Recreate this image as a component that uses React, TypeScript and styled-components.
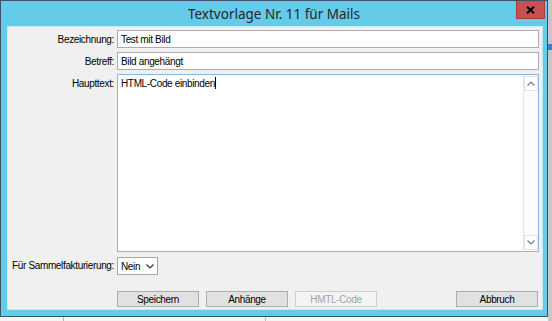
import React from 'react';
import styled, { createGlobalStyle } from 'styled-components';

const Global = createGlobalStyle`
  html, body { margin: 0; padding: 0; }
  body { width: 552px; height: 321px; overflow: hidden; background: #f3f3f3; }
`;

const Desktop = styled.div`
  width: 552px;
  height: 321px;
  background-color: #f4f4f4;
  background-image:
    linear-gradient(#3a7fd0, #3a7fd0),
    linear-gradient(#c2c8cc, #c2c8cc),
    linear-gradient(#b8b8b8, #b8b8b8),
    linear-gradient(#b8b8b8, #b8b8b8);
  background-size: 4px 6px, 4px 321px, 1px 321px, 1px 321px;
  background-position: 548px 44px, 548px 0, 63px 0, 265px 0;
  background-repeat: no-repeat;
  font-family: "Liberation Sans", Arial, sans-serif;
`;

const Window = styled.div`
  box-sizing: border-box;
  width: 548px;
  height: 317px;
  border: 1px solid #3c5363;
  background: #65cbe9;
  display: flex;
  flex-direction: column;
`;

const TitleBar = styled.div`
  height: 25px;
  display: grid;
  grid-template-columns: 1fr auto 1fr;
  align-items: center;
`;

const Title = styled.div`
  grid-column: 2;
  font-family: "Noto Sans", "Open Sans", sans-serif;
  font-size: 13.5px;
  color: #262626;
  padding-top: 1px;
`;

const CloseButton = styled.div`
  grid-column: 3;
  justify-self: end;
  align-self: start;
  box-sizing: border-box;
  width: 29px;
  height: 18px;
  margin-right: 2px;
  background: #c75050;
  border: 1px solid #a43c3c;
  border-top: none;
  display: flex;
  align-items: center;
  justify-content: center;
`;

const Client = styled.div`
  flex: 1;
  margin: 0 4px 6px 6px;
  background: #f0f0f0;
  border: 1px solid #c8e8f4;
  padding: 3px 0 0 0;
`;

const Form = styled.div`
  display: grid;
  grid-template-columns: 106px 422px;
  column-gap: 3px;
  row-gap: 4px;
  font-size: 10px;
  letter-spacing: -0.35px;
  color: #000;
`;

const Label = styled.div<{ $top?: boolean }>`
  text-align: right;
  align-self: ${p => (p.$top ? 'start' : 'center')};
  padding-top: ${p => (p.$top ? '3px' : '0')};
  white-space: nowrap;
  line-height: 13px;
`;

const Field = styled.div`
  box-sizing: border-box;
  height: 18px;
  border: 1px solid #acacac;
  background: #fff;
  padding: 0 3px;
  display: flex;
  align-items: center;
  line-height: 13px;
`;

const TextArea = styled.div`
  box-sizing: border-box;
  height: 178px;
  border: 1px solid #8fb6d8;
  background: #fff;
  display: grid;
  grid-template-columns: 1fr 15px;
`;

const TextContent = styled.div`
  padding: 2px 3px;
  line-height: 13px;
`;

const Caret = styled.span`
  display: inline-block;
  width: 1px;
  height: 12px;
  background: #000;
  vertical-align: -2px;
`;

const ScrollBar = styled.div`
  display: flex;
  flex-direction: column;
  justify-content: space-between;
  background: #fcfcfc;
  border-left: 1px solid #e4e4e4;
  margin: 1px 0 1px 0;
`;

const ScrollButton = styled.div`
  box-sizing: border-box;
  height: 15px;
  border: 1px solid #e2e2e2;
  background: #fff;
  display: flex;
  align-items: center;
  justify-content: center;
`;

const Select = styled.div`
  box-sizing: border-box;
  width: 41px;
  height: 18px;
  margin-top: 1px;
  border: 1px solid #a6a6a6;
  background: #fff;
  padding: 0 3px;
  display: flex;
  align-items: center;
  justify-content: space-between;
  line-height: 13px;
`;

const ButtonBar = styled.div`
  grid-column: 2;
  display: flex;
  gap: 7px;
  margin-top: 12px;
  padding-right: 1px;
`;

const Button = styled.div<{ $disabled?: boolean; $end?: boolean }>`
  box-sizing: border-box;
  width: 82px;
  height: 16px;
  margin-left: ${p => (p.$end ? 'auto' : '0')};
  border: 1px solid ${p => (p.$disabled ? '#cfcfcf' : '#adadad')};
  background: ${p => (p.$disabled ? '#f4f4f4' : '#e1e1e1')};
  color: ${p => (p.$disabled ? '#a3a3a3' : '#000')};
  display: flex;
  align-items: center;
  justify-content: center;
  line-height: 13px;
`;

const Chevron = ({ up, color }: { up?: boolean; color: string }) => (
  <svg width="8" height="5" viewBox="0 0 8 5">
    <path d={up ? 'M0.5 4.5 L4 1 L7.5 4.5' : 'M0.5 0.5 L4 4 L7.5 0.5'} fill="none" stroke={color} strokeWidth="1.2" />
  </svg>
);

export default function App() {
  return (
    <Desktop>
      <Global />
      <Window>
        <TitleBar>
          <Title>Textvorlage Nr. 11 für Mails</Title>
          <CloseButton>
            <svg width="9" height="8" viewBox="0 0 9 8">
              <path d="M1 0.8 L8 7.2 M8 0.8 L1 7.2" stroke="#000" strokeWidth="2" />
            </svg>
          </CloseButton>
        </TitleBar>
        <Client>
          <Form>
            <Label>Bezeichnung:</Label>
            <Field>Test mit Bild</Field>
            <Label>Betreff:</Label>
            <Field>Bild angehängt</Field>
            <Label $top>Haupttext:</Label>
            <TextArea>
              <TextContent>
                HTML-Code einbinden<Caret />
              </TextContent>
              <ScrollBar>
                <ScrollButton>
                  <Chevron up color="#7a7a7a" />
                </ScrollButton>
                <ScrollButton>
                  <Chevron color="#7a7a7a" />
                </ScrollButton>
              </ScrollBar>
            </TextArea>
            <Label>Für Sammelfakturierung:</Label>
            <div>
              <Select>
                <span>Nein</span>
                <Chevron color="#333" />
              </Select>
            </div>
            <ButtonBar>
              <Button>Speichern</Button>
              <Button>Anhänge</Button>
              <Button $disabled>HMTL-Code</Button>
              <Button $end>Abbruch</Button>
            </ButtonBar>
          </Form>
        </Client>
      </Window>
    </Desktop>
  );
}
